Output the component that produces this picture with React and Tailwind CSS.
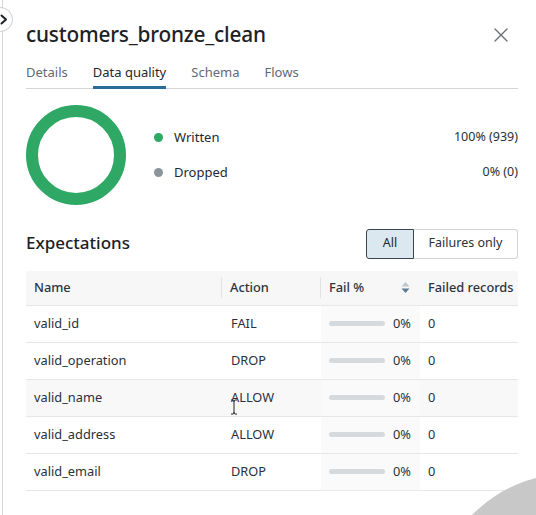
import React from "react";

const rows = [
  { name: "valid_id", action: "FAIL" },
  { name: "valid_operation", action: "DROP" },
  { name: "valid_name", action: "ALLOW", hover: true },
  { name: "valid_address", action: "ALLOW" },
  { name: "valid_email", action: "DROP" },
];

function SortIcon() {
  return (
    <svg width="9" height="13" viewBox="0 0 9 13" className="shrink-0">
      <path d="M4.5 1 L8.5 5.5 H0.5 Z" fill="#bcc7d1" />
      <path d="M4.5 12 L8.5 7.5 H0.5 Z" fill="#5b7c98" />
    </svg>
  );
}

export default function App() {
  return (
    <div
      className="relative w-[536px] h-[515px] overflow-hidden bg-white flex"
      style={{ fontFamily: '"Noto Sans", "Open Sans", sans-serif' }}
    >
      <div className="w-[2px] shrink-0" />
      <div className="w-[1px] shrink-0 bg-[#d4d6d8]" />
      <div className="flex-1 pl-[23px] pr-[18px] pt-[18px] text-[#2b3038]">
        {/* Header */}
        <div className="flex items-center justify-between h-[32px]">
          <h1 className="text-[20.8px] leading-[30px] font-medium text-[#1d2125] tracking-[-0.2px]">
            customers_bronze_clean
          </h1>
          <svg width="14" height="14" viewBox="0 0 14 14" className="mr-[10px] mt-[1px]">
            <path d="M1 1 L13 13 M13 1 L1 13" stroke="#6b7176" strokeWidth="1.4" strokeLinecap="round" />
          </svg>
        </div>

        {/* Tabs */}
        <div className="mt-[13px] flex gap-[25px] border-b border-[#d2d4d6] text-[13px]">
          <div className="pb-[2px] text-[#5f6a75] border-b-[3px] border-transparent">Details</div>
          <div className="pb-[2px] text-[#1f2730] border-b-[3px] border-[#2a6d98] -mb-[1px]">Data quality</div>
          <div className="pb-[2px] text-[#5f6a75] border-b-[3px] border-transparent">Schema</div>
          <div className="pb-[2px] text-[#5f6a75] border-b-[3px] border-transparent">Flows</div>
        </div>

        {/* Donut + legend */}
        <div className="mt-[16px] flex items-start">
          <svg width="100" height="100" viewBox="0 0 100 100" className="shrink-0">
            <circle cx="50" cy="50" r="44" fill="none" stroke="#2fa866" strokeWidth="12" />
          </svg>
          <div className="flex-1 ml-[28px] pt-[23px] text-[13px]">
            <div className="flex items-center h-[20px]">
              <span className="w-[9px] h-[9px] rounded-full bg-[#2fa866] mr-[11px]" />
              <span className="text-[#1f2730]">Written</span>
              <span className="ml-auto text-[12.5px] text-[#2b3038]">100% (939)</span>
            </div>
            <div className="flex items-center h-[20px] mt-[15px]">
              <span className="w-[9px] h-[9px] rounded-full bg-[#8c949c] mr-[11px]" />
              <span className="text-[#1f2730]">Dropped</span>
              <span className="ml-auto text-[12.5px] text-[#2b3038]">0% (0)</span>
            </div>
          </div>
        </div>

        {/* Expectations */}
        <div className="mt-[24px] flex items-center justify-between">
          <h2 className="text-[17px] font-medium text-[#1d2125] -mt-[2px]">Expectations</h2>
          <div className="flex h-[30px] text-[12.5px]">
            <div className="w-[48px] flex items-center justify-center bg-[#dce8f0] border border-[#3a4652] rounded-l-[3px] text-[#1f2730]">
              All
            </div>
            <div className="w-[104px] flex items-center justify-center border border-l-0 border-[#cfd3d7] rounded-r-[3px] text-[#2b3038]">
              Failures only
            </div>
          </div>
        </div>

        {/* Table */}
        <div className="mt-[12px] text-[12.8px]">
          <div className="flex h-[35px] items-center bg-[#f7f7f7] border-b border-[#e6e7e8] text-[#2b3540] font-medium">
            <div className="w-[196px] pl-[8px] flex items-center border-r border-[#e2e3e4] h-[21px]">Name</div>
            <div className="w-[99px] pl-[8px] flex items-center border-r border-[#e2e3e4] h-[21px]">Action</div>
            <div className="w-[99px] pl-[8px] pr-[10px] flex items-center justify-between h-[21px]">
              <span>Fail %</span>
              <SortIcon />
            </div>
            <div className="flex-1 pl-[8px] flex items-center">Failed records</div>
          </div>
          {rows.map((r) => (
            <div
              key={r.name}
              className={`flex h-[37px] items-stretch border-b border-[#e6e7e8] ${r.hover ? "bg-[#f8f8f8]" : ""}`}
            >
              <div className="w-[196px] pl-[8px] flex items-center text-[#2b3038]">{r.name}</div>
              <div className="w-[99px] pl-[9px] flex items-center text-[#2b3038]">{r.action}</div>
              <div className="w-[99px] pl-[8px] flex items-center bg-[#fafafa]">
                <div className="w-[56px] h-[5px] rounded-full bg-[#d5dade]" />
                <span className="ml-[8px] text-[#2b3038]">0%</span>
              </div>
              <div className="flex-1 pl-[8px] flex items-center text-[#2b3038]">0</div>
            </div>
          ))}
        </div>
      </div>

      {/* collapse button at left edge */}
      <div className="absolute left-[-12px] top-[7px] w-[25px] h-[25px] rounded-full bg-white border border-[#c9cccf] flex items-center justify-end pr-[4px]">
        <svg width="8" height="11" viewBox="0 0 8 11">
          <path d="M1.5 1.5 L6 5.5 L1.5 9.5" fill="none" stroke="#1d2125" strokeWidth="2" strokeLinecap="round" strokeLinejoin="round" />
        </svg>
      </div>

      {/* I-beam cursor */}
      <svg className="absolute left-[230px] top-[399px]" width="8" height="16" viewBox="0 0 8 16">
        <path d="M1 1 H3 Q4 1 4 3 V13 Q4 15 3 15 H1 M7 1 H5 Q4 1 4 3 M4 13 Q4 15 5 15 H7" fill="none" stroke="#1d2125" strokeWidth="1" />
      </svg>

      {/* decorative gray circle bottom-right */}
      <div className="absolute left-[434px] top-[474px] w-[270px] h-[270px] rounded-full bg-[#c8c8c8]" />
    </div>
  );
}
